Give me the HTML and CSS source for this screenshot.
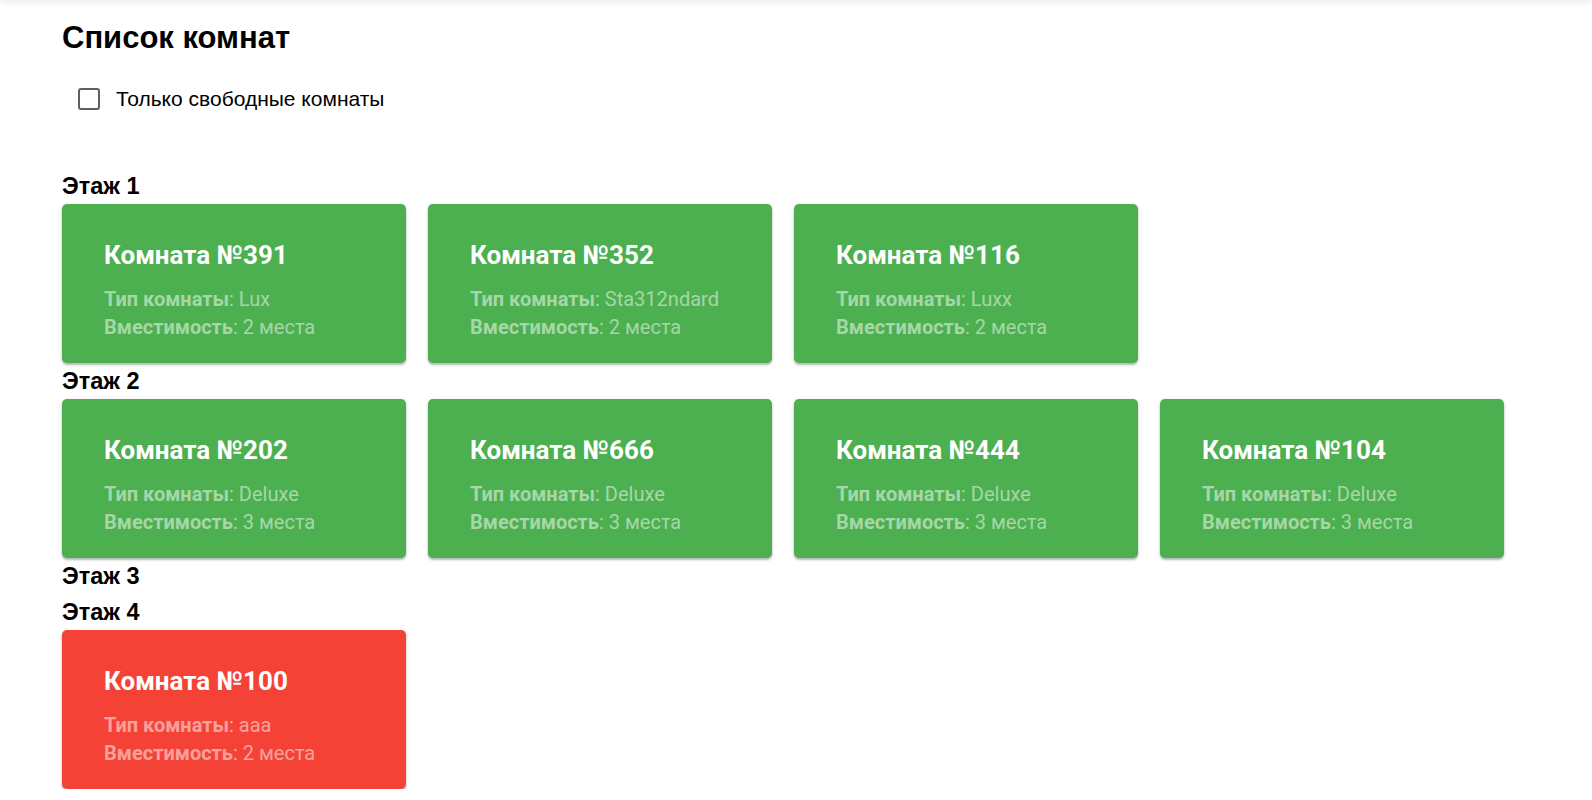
FILE: index.html
```html
<!DOCTYPE html>
<html lang="ru">
<head>
<meta charset="utf-8">
<title>Список комнат</title>
<link rel="stylesheet" href="styles.css">
</head>
<body>
<div class="topbar"></div>
<main class="page">
  <h1 class="title">Список комнат</h1>
  <label class="filter">
    <span class="box"></span>
    <span class="filter-text">Только свободные комнаты</span>
  </label>
  <div class="floors">
    <section class="floor">
      <h3 class="floor-title">Этаж 1</h3>
      <div class="rooms">
        <div class="card free">
          <div class="card-title">Комната №391</div>
          <div class="line"><b>Тип комнаты</b>: Lux</div>
          <div class="line"><b>Вместимость</b>: 2 места</div>
        </div>
        <div class="card free">
          <div class="card-title">Комната №352</div>
          <div class="line"><b>Тип комнаты</b>: Sta312ndard</div>
          <div class="line"><b>Вместимость</b>: 2 места</div>
        </div>
        <div class="card free">
          <div class="card-title">Комната №116</div>
          <div class="line"><b>Тип комнаты</b>: Luxx</div>
          <div class="line"><b>Вместимость</b>: 2 места</div>
        </div>
      </div>
    </section>
    <section class="floor">
      <h3 class="floor-title">Этаж 2</h3>
      <div class="rooms">
        <div class="card free">
          <div class="card-title">Комната №202</div>
          <div class="line"><b>Тип комнаты</b>: Deluxe</div>
          <div class="line"><b>Вместимость</b>: 3 места</div>
        </div>
        <div class="card free">
          <div class="card-title">Комната №666</div>
          <div class="line"><b>Тип комнаты</b>: Deluxe</div>
          <div class="line"><b>Вместимость</b>: 3 места</div>
        </div>
        <div class="card free">
          <div class="card-title">Комната №444</div>
          <div class="line"><b>Тип комнаты</b>: Deluxe</div>
          <div class="line"><b>Вместимость</b>: 3 места</div>
        </div>
        <div class="card free">
          <div class="card-title">Комната №104</div>
          <div class="line"><b>Тип комнаты</b>: Deluxe</div>
          <div class="line"><b>Вместимость</b>: 3 места</div>
        </div>
      </div>
    </section>
    <section class="floor">
      <h3 class="floor-title">Этаж 3</h3>
    </section>
    <section class="floor">
      <h3 class="floor-title">Этаж 4</h3>
      <div class="rooms">
        <div class="card busy">
          <div class="card-title">Комната №100</div>
          <div class="line"><b>Тип комнаты</b>: aaa</div>
          <div class="line"><b>Вместимость</b>: 2 места</div>
        </div>
      </div>
    </section>
  </div>
</main>
</body>
</html>
```

FILE: styles.css
```css
html, body {
  margin: 0;
  padding: 0;
  background: #ffffff;
}

body {
  font-family: "Liberation Sans", Arial, sans-serif;
  color: #000000;
  overflow: hidden;
}

.topbar {
  height: 0;
  box-shadow: 0 0 6px 1px rgba(0, 0, 0, 0.22);
}

.page {
  padding: 0 0 0 62px;
}

.title {
  margin: 22px 0 0 0;
  font-size: 31px;
  line-height: 32px;
  font-weight: 700;
}

.filter {
  display: flex;
  align-items: center;
  gap: 16px;
  margin: 33px 0 0 16px;
  height: 24px;
  cursor: pointer;
}

.box {
  width: 18px;
  height: 18px;
  border: 2px solid #5f5f5f;
  border-radius: 3px;
  box-sizing: content-box;
  flex: none;
}

.filter-text {
  font-size: 21px;
  line-height: 24px;
}

.floors {
  margin-top: 57px;
}

.floor-title {
  margin: 0;
  height: 36px;
  display: flex;
  align-items: center;
  font-size: 23.5px;
  font-weight: 700;
}

.rooms {
  display: flex;
  gap: 22px;
}

.card {
  width: 344px;
  height: 159px;
  box-sizing: border-box;
  padding: 38px 20px 0 42px;
  border-radius: 5px;
  box-shadow: 0 2px 2px rgba(0, 0, 0, 0.22), 0 1px 4px rgba(0, 0, 0, 0.12);
  font-family: Roboto, "Liberation Sans", sans-serif;
  color: rgba(255, 255, 255, 0.5);
}

.card.free {
  background: #4caf50;
}

.card.busy {
  background: #f44336;
}

.card-title {
  color: #ffffff;
  font-size: 26px;
  font-weight: 700;
  line-height: 26px;
  margin-bottom: 18px;
}

.line {
  font-size: 20px;
  line-height: 27.5px;
}

.line b {
  font-weight: 700;
}
```
